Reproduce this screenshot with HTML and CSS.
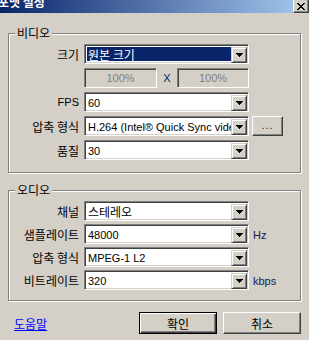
FILE: index.html
```html
<!DOCTYPE html>
<html>
<head>
    <title>포맷 설정</title>
    <meta charset="utf-8">
    <link rel="stylesheet" href="styles.css">
</head>
<body>

<div class="titlebar">
    <span class="title">포맷 설정</span>
    <span class="close-btn">
        <svg width="8" height="7" viewBox="0 0 8 7" shape-rendering="crispEdges">
            <path d="M0 0h2v1h-2zM6 0h2v1h-2zM1 1h2v1h-2zM5 1h2v1h-2zM2 2h4v1h-4zM3 3h2v1h-2zM2 4h4v1h-4zM1 5h2v1h-2zM5 5h2v1h-2zM0 6h2v1h-2zM6 6h2v1h-2z" fill="#000"/>
        </svg>
    </span>
</div>

<div class="dialog">

    <div class="group group-video">
        <span class="legend">비디오</span>
        <div class="rows">
            <div class="row">
                <span class="label">크기</span>
                <div class="combo selected">
                    <span class="combo-text">원본 크기</span>
                    <span class="drop-btn"><svg width="7" height="4" viewBox="0 0 7 4" shape-rendering="crispEdges"><path d="M0 0h7v1h-1v1h-1v1h-1v1h-1v-1h-1v-1h-1v-1h-1z" fill="#000"/></svg></span>
                </div>
            </div>
            <div class="row">
                <span class="label"></span>
                <div class="field disabled">100%</div>
                <span class="times">X</span>
                <div class="field disabled second">100%</div>
            </div>
            <div class="row">
                <span class="label lat">FPS</span>
                <div class="combo">
                    <span class="combo-text lat">60</span>
                    <span class="drop-btn"><svg width="7" height="4" viewBox="0 0 7 4" shape-rendering="crispEdges"><path d="M0 0h7v1h-1v1h-1v1h-1v1h-1v-1h-1v-1h-1v-1h-1z" fill="#000"/></svg></span>
                </div>
            </div>
            <div class="row">
                <span class="label">압축 형식</span>
                <div class="combo">
                    <span class="combo-text lat clip">H.264 (Intel® Quick Sync video)</span>
                    <span class="drop-btn"><svg width="7" height="4" viewBox="0 0 7 4" shape-rendering="crispEdges"><path d="M0 0h7v1h-1v1h-1v1h-1v1h-1v-1h-1v-1h-1v-1h-1z" fill="#000"/></svg></span>
                </div>
                <span class="btn small-btn">...</span>
            </div>
            <div class="row">
                <span class="label">품질</span>
                <div class="combo">
                    <span class="combo-text lat">30</span>
                    <span class="drop-btn"><svg width="7" height="4" viewBox="0 0 7 4" shape-rendering="crispEdges"><path d="M0 0h7v1h-1v1h-1v1h-1v1h-1v-1h-1v-1h-1v-1h-1z" fill="#000"/></svg></span>
                </div>
            </div>
        </div>
    </div>

    <div class="group group-audio">
        <span class="legend">오디오</span>
        <div class="rows tight">
            <div class="row">
                <span class="label">채널</span>
                <div class="combo">
                    <span class="combo-text">스테레오</span>
                    <span class="drop-btn"><svg width="7" height="4" viewBox="0 0 7 4" shape-rendering="crispEdges"><path d="M0 0h7v1h-1v1h-1v1h-1v1h-1v-1h-1v-1h-1v-1h-1z" fill="#000"/></svg></span>
                </div>
            </div>
            <div class="row">
                <span class="label">샘플레이트</span>
                <div class="combo">
                    <span class="combo-text lat">48000</span>
                    <span class="drop-btn"><svg width="7" height="4" viewBox="0 0 7 4" shape-rendering="crispEdges"><path d="M0 0h7v1h-1v1h-1v1h-1v1h-1v-1h-1v-1h-1v-1h-1z" fill="#000"/></svg></span>
                </div>
                <span class="unit lat">Hz</span>
            </div>
            <div class="row">
                <span class="label">압축 형식</span>
                <div class="combo">
                    <span class="combo-text lat">MPEG-1 L2</span>
                    <span class="drop-btn"><svg width="7" height="4" viewBox="0 0 7 4" shape-rendering="crispEdges"><path d="M0 0h7v1h-1v1h-1v1h-1v1h-1v-1h-1v-1h-1v-1h-1z" fill="#000"/></svg></span>
                </div>
            </div>
            <div class="row">
                <span class="label">비트레이트</span>
                <div class="combo">
                    <span class="combo-text lat">320</span>
                    <span class="drop-btn"><svg width="7" height="4" viewBox="0 0 7 4" shape-rendering="crispEdges"><path d="M0 0h7v1h-1v1h-1v1h-1v1h-1v-1h-1v-1h-1v-1h-1z" fill="#000"/></svg></span>
                </div>
                <span class="unit lat">kbps</span>
            </div>
        </div>
    </div>

    <div class="footer">
        <a class="help-link" href="#">도움말</a>
        <div class="buttons">
            <span class="btn big-btn default">확인</span>
            <span class="btn big-btn">취소</span>
        </div>
    </div>

</div>

</body>
</html>
```

FILE: styles.css
```css
body, html {
    margin: 0;
    padding: 0;
}

body {
    width: 309px;
    height: 340px;
    overflow: hidden;
    background: #d4d0c8;
    font-family: "Noto Sans CJK KR", "Liberation Sans", sans-serif;
    font-size: 12px;
    color: #000;
}

.lat {
    font-family: "Liberation Sans", "Noto Sans CJK KR", sans-serif;
    font-size: 11px;
}

/* title bar, cut off at the top */
.titlebar {
    height: 13px;
    display: flex;
    justify-content: space-between;
    overflow: hidden;
    background: linear-gradient(to right, #0a246a, #a6caf0);
}

.title {
    color: #fff;
    font-weight: bold;
    line-height: 14px;
    margin-top: -5px;
    margin-left: -2px;
}

.close-btn {
    width: 16px;
    height: 13px;
    box-sizing: border-box;
    display: flex;
    align-items: center;
    justify-content: center;
    background: #d4d0c8;
    border: 1px solid;
    border-color: #fff #404040 #404040 #fff;
    border-top: 0;
    box-shadow: inset -1px -1px 0 #808080;
}

.dialog {
    padding: 20px 8px 0 8px;
}

/* group boxes */
.group {
    border: 1px solid #808080;
    box-shadow: inset 1px 1px 0 #fff, 1px 1px 0 #fff;
    display: flex;
    flex-direction: column;
}

.group-video {
    padding-bottom: 12px;
}

.group-audio {
    margin-top: 17px;
    padding-bottom: 10px;
}

.legend {
    align-self: flex-start;
    line-height: 14px;
    margin-top: -8px;
    margin-left: 6px;
    padding: 0 2px;
    background: #d4d0c8;
}

.rows {
    display: flex;
    flex-direction: column;
    gap: 4px;
    margin-top: 4px;
}

.rows.tight {
    gap: 3px;
}

.row {
    display: flex;
    align-items: center;
    height: 20px;
}

.label {
    width: 70px;
    margin-right: 5px;
    text-align: right;
    white-space: nowrap;
}

/* sunken controls */
.combo, .field {
    height: 20px;
    box-sizing: border-box;
    border: 1px solid;
    border-color: #808080 #fff #fff #808080;
    box-shadow: inset 1px 1px 0 #404040, inset -1px -1px 0 #d4d0c8;
}

.combo {
    width: 165px;
    display: flex;
    padding: 2px 1px 2px 2px;
    background: #fff;
}

.combo-text {
    flex: 1;
    white-space: nowrap;
    line-height: 16px;
    padding-left: 1px;
}

.combo-text.clip {
    overflow: hidden;
}

.combo.selected .combo-text {
    background: #0a246a;
    color: #fff;
}

.drop-btn {
    width: 16px;
    height: 16px;
    box-sizing: border-box;
    display: flex;
    align-items: center;
    justify-content: center;
    background: #d4d0c8;
    border: 1px solid;
    border-color: #d4d0c8 #404040 #404040 #d4d0c8;
    box-shadow: inset 1px 1px 0 #fff, inset -1px -1px 0 #808080;
}

.field.disabled {
    width: 73px;
    background: #d4d0c8;
    color: #808080;
    text-align: center;
    line-height: 18px;
    font-family: "Liberation Sans", sans-serif;
    font-size: 11px;
}

.field.second {
    width: 72px;
}

.times {
    width: 20px;
    text-align: center;
    font-family: "Liberation Sans", sans-serif;
    font-size: 11px;
    color: #0c1a5a;
}

.unit {
    margin-left: 4px;
    margin-top: 2px;
    color: #0c1a5a;
}

/* raised buttons */
.btn {
    box-sizing: border-box;
    display: flex;
    align-items: center;
    justify-content: center;
    background: #d4d0c8;
    border: 1px solid;
    border-color: #fff #404040 #404040 #fff;
    box-shadow: inset -1px -1px 0 #808080;
}

.small-btn {
    width: 31px;
    height: 20px;
    margin-left: 3px;
    color: #1a1a6a;
    font-family: "Liberation Sans", sans-serif;
    font-size: 11px;
    letter-spacing: 1px;
    padding-bottom: 3px;
}

.footer {
    display: flex;
    align-items: center;
    margin-top: 11px;
}

.help-link {
    margin-left: 6px;
    color: #0000ff;
    text-decoration: underline;
}

.buttons {
    margin-left: auto;
    display: flex;
    gap: 6px;
}

.big-btn {
    width: 78px;
    height: 22px;
}

.btn.default {
    border-color: #000;
    box-shadow: inset 1px 1px 0 #fff, inset -1px -1px 0 #404040, inset -2px -2px 0 #808080;
}
```
